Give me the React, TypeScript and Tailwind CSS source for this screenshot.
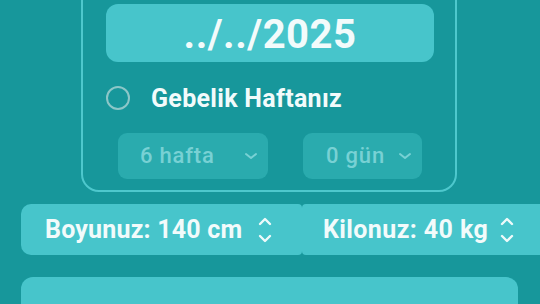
import React from "react";

function Chevron({ className = "" }: { className?: string }) {
  return (
    <svg width="14" height="8" viewBox="0 0 14 8" fill="none" className={className}>
      <path d="M2 2l5 4 5-4" stroke="currentColor" strokeWidth="2" strokeLinecap="round" strokeLinejoin="round" />
    </svg>
  );
}

function UpDown() {
  return (
    <svg width="14" height="26" viewBox="0 0 14 26" fill="none" className="shrink-0 text-[#eefafa]">
      <path d="M2 7l5-5 5 5" stroke="currentColor" strokeWidth="2.4" strokeLinecap="round" strokeLinejoin="round" />
      <path d="M2 19l5 5 5-5" stroke="currentColor" strokeWidth="2.4" strokeLinecap="round" strokeLinejoin="round" />
    </svg>
  );
}

export default function App() {
  return (
    <main
      className="w-[540px] h-[304px] overflow-hidden bg-[#17979b] text-[#f2fbfb]"
      style={{ fontFamily: "Roboto, 'Liberation Sans', sans-serif" }}
    >
      <section className="ml-[81px] w-[376px] -mt-[20px] rounded-[18px] border-2 border-[#4ec8cd] px-[23px] pt-[22px] pb-[11px]">
        <div className="flex h-[58px] w-[328px] items-center justify-center rounded-[12px] bg-[#47c5cb] pt-[3px]">
          <span className="text-[40px] font-bold leading-none tracking-[0.5px]">../../2025</span>
        </div>

        <div className="mt-[21px] flex h-[30px] items-center">
          <span className="h-[24px] w-[24px] shrink-0 rounded-full border-2 border-[#8cc7c8]" />
          <span className="ml-[21px] whitespace-nowrap text-[25px] font-bold leading-none tracking-[0.3px]">
            Gebelik Haftanız
          </span>
        </div>

        <div className="mt-[20px] flex h-[46px] pl-[12px]">
          <div className="flex w-[150px] items-center rounded-[9px] bg-[#2aabae] pl-[22px] pr-[10px]">
            <span className="flex-1 whitespace-nowrap text-[22px] font-medium leading-none tracking-[0.8px] text-[#78d1d4]">
              6 hafta
            </span>
            <Chevron className="text-[#78d1d4]" />
          </div>
          <div className="ml-[35px] flex w-[119px] items-center rounded-[9px] bg-[#2aabae] pl-[23px] pr-[10px]">
            <span className="flex-1 whitespace-nowrap text-[22px] font-medium leading-none tracking-[0.8px] text-[#78d1d4]">
              0 gün
            </span>
            <Chevron className="text-[#78d1d4]" />
          </div>
        </div>
      </section>

      <div className="mt-[12px] ml-[21px] flex h-[51px]">
        <div className="flex w-[281px] items-center gap-[16px] rounded-l-[10px] rounded-r-[4px] bg-[#47c5cb] pl-[24px]">
          <span className="whitespace-nowrap text-[25px] font-bold leading-none tracking-[0.2px]">Boyunuz: 140 cm</span>
          <UpDown />
        </div>
        <div className="flex flex-1 items-center gap-[12px] rounded-l-[4px] bg-[#47c5cb] pl-[21px]">
          <span className="whitespace-nowrap text-[25px] font-bold leading-none tracking-[0.4px]">Kilonuz: 40 kg</span>
          <UpDown />
        </div>
      </div>

      <div className="mt-[22px] ml-[21px] h-[60px] w-[497px] rounded-[12px] bg-[#47c5cb]" />
    </main>
  );
}
